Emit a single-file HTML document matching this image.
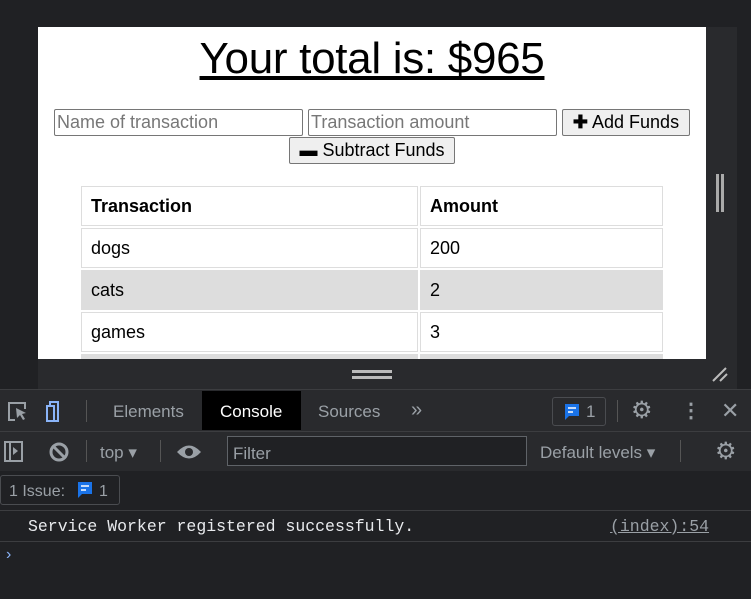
<!DOCTYPE html><html><head><style>
*{margin:0;padding:0;box-sizing:border-box}
body{width:751px;height:599px;background:#202124;position:relative;overflow:hidden;font-family:"Liberation Sans",sans-serif}
.a{position:absolute}
.page{left:38px;top:27px;width:668px;height:332px;background:#fff;overflow:hidden}
h1{position:absolute;left:0;width:668px;top:7px;text-align:center;font-weight:normal;font-size:44px;text-decoration:underline;color:#000;letter-spacing:-0.3px}
.inp{position:absolute;height:27px;border:1px solid #767676;border-radius:2px;font-size:18px;color:#777;padding:1px 2px;line-height:23px}
.btn{position:absolute;height:27px;border:1px solid #767676;border-radius:2px;background:#efefef;font-size:18px;color:#000;line-height:25px;text-align:center}
.c{position:absolute;border:1px solid #ddd;font-size:18px;color:#000;padding-left:9px;line-height:38px;height:40px}
.dt{color:#9aa0a6;font-size:17px}
.mono{font-family:'Liberation Mono',monospace;font-size:16.5px}
</style></head><body>
<div class="a" style="left:38px;top:359px;width:668px;height:30px;background:#292a2d"></div>
<div class="a" style="left:706px;top:27px;width:31px;height:362px;background:#292a2d"></div>
<div class="a" style="left:716px;top:174px;width:3px;height:38px;background:#aaa"></div>
<div class="a" style="left:721px;top:174px;width:3px;height:38px;background:#aaa"></div>
<div class="a" style="left:352px;top:370px;width:40px;height:3px;background:#bbb"></div>
<div class="a" style="left:352px;top:376px;width:40px;height:3px;background:#bbb"></div>
<svg class="a" style="left:710px;top:364px" width="22" height="20"><path d="M3 17L16 4M10 17L17 10" stroke="#bbb" stroke-width="2"/></svg>
<div class="a page">
<h1>Your total is: $965</h1>
<div class="inp" style="left:16px;top:82px;width:249px">Name of transaction</div>
<div class="inp" style="left:270px;top:82px;width:249px">Transaction amount</div>
<div class="btn" style="left:524px;top:82px;width:128px"><b>✚</b> Add Funds</div>
<div class="btn" style="left:251px;top:110px;width:166px"><b>▬</b> Subtract Funds</div>
<div class="c" style="left:43px;top:159px;width:337px;font-weight:bold">Transaction</div>
<div class="c" style="left:382px;top:159px;width:243px;font-weight:bold">Amount</div>
<div class="c" style="left:43px;top:201px;width:337px">dogs</div>
<div class="c" style="left:382px;top:201px;width:243px">200</div>
<div class="c" style="left:43px;top:243px;width:337px;background:#ddd">cats</div>
<div class="c" style="left:382px;top:243px;width:243px;background:#ddd">2</div>
<div class="c" style="left:43px;top:285px;width:337px">games</div>
<div class="c" style="left:382px;top:285px;width:243px">3</div>
<div class="c" style="left:43px;top:327px;width:337px;background:#ddd"></div>
<div class="c" style="left:382px;top:327px;width:243px;background:#ddd"></div>
</div>
<div class="a" style="left:0;top:389px;width:751px;height:1px;background:#3c3d40"></div>
<div class="a" style="left:0;top:390px;width:751px;height:41px;background:#292a2d"></div>
<div class="a" style="left:202px;top:391px;width:99px;height:39px;background:#000"></div>
<div class="a dt" style="left:113px;top:402px">Elements</div>
<div class="a" style="left:220px;top:402px;color:#fff;font-size:17px">Console</div>
<div class="a dt" style="left:318px;top:402px">Sources</div>
<div class="a dt" style="left:411px;top:399px;font-size:20px">»</div>
<svg class="a" style="left:6px;top:400px" width="60" height="24"><path d="M9 20H3V3h16v6" stroke="#9aa0a6" fill="none" stroke-width="2"/><path d="M10 8l10 5-4 1 3 5-2 1-3-5-3 3z" fill="#9aa0a6"/><rect x="41" y="6" width="7" height="15" stroke="#8ab4f8" fill="none" stroke-width="2"/><path d="M44 6V2h8v19h-4" stroke="#8ab4f8" fill="none" stroke-width="2"/></svg>
<div class="a" style="left:86px;top:400px;width:1px;height:22px;background:#555"></div>
<div class="a" style="left:552px;top:397px;width:54px;height:29px;border:1px solid #4a4c50;border-radius:3px"></div>
<svg class="a" style="left:563px;top:402px" width="20" height="20"><path d="M2 2h14v12H6l-4 4z" fill="#1a73e8"/><path d="M5 6h8M5 10h5" stroke="#fff" stroke-width="1.5"/></svg>
<div class="a dt" style="left:586px;top:402px">1</div>
<div class="a" style="left:617px;top:400px;width:1px;height:22px;background:#555"></div>
<div class="a dt" style="left:631px;top:396px;font-size:24px">⚙</div>
<div class="a dt" style="left:681px;top:398px;font-size:20px;font-weight:bold">⋮</div>
<div class="a dt" style="left:721px;top:398px;font-size:22px">✕</div>
<div class="a" style="left:0;top:431px;width:751px;height:1px;background:#3c3d40"></div>
<div class="a" style="left:0;top:432px;width:751px;height:39px;background:#292a2d"></div>
<svg class="a" style="left:4px;top:440px" width="70" height="24"><rect x="1" y="2" width="17" height="19" stroke="#9aa0a6" fill="none" stroke-width="2"/><path d="M6 2v19" stroke="#9aa0a6" stroke-width="2"/><path d="M9 7l5 4-5 4z" fill="#9aa0a6"/><circle cx="55" cy="12" r="8" stroke="#9aa0a6" fill="none" stroke-width="3"/><path d="M49 6l12 12" stroke="#9aa0a6" stroke-width="3"/></svg>
<div class="a" style="left:86px;top:440px;width:1px;height:22px;background:#555"></div>
<div class="a dt" style="left:100px;top:443px">top ▾</div>
<div class="a" style="left:160px;top:440px;width:1px;height:22px;background:#555"></div>
<svg class="a" style="left:176px;top:442px" width="26" height="20"><path d="M1 10Q13 -3 25 10Q13 23 1 10z" fill="#9aa0a6"/><circle cx="13" cy="10" r="4" fill="#292a2d"/></svg>
<div class="a" style="left:227px;top:436px;width:300px;height:30px;border:1px solid #5f6368;background:#202124"></div>
<div class="a dt" style="left:233px;top:444px">Filter</div>
<div class="a dt" style="left:540px;top:443px">Default levels ▾</div>
<div class="a" style="left:680px;top:440px;width:1px;height:22px;background:#555"></div>
<div class="a dt" style="left:715px;top:437px;font-size:24px">⚙</div>
<div class="a" style="left:0;top:475px;width:120px;height:30px;border:1px solid #4a4c50;border-radius:3px"></div>
<div class="a dt" style="left:9px;top:483px;font-size:16px">1 Issue:</div>
<svg class="a" style="left:77px;top:481px" width="18" height="20"><path d="M1 1h14v12H5l-4 4z" fill="#1a73e8"/><path d="M4 5h8M4 9h5" stroke="#fff" stroke-width="1.5"/></svg>
<div class="a dt" style="left:99px;top:483px;font-size:16px">1</div>
<div class="a" style="left:0;top:510px;width:751px;height:1px;background:#3c3d40"></div>
<div class="a mono" style="left:28px;top:517px;color:#e8eaed">Service Worker registered successfully.</div>
<div class="a mono" style="left:610px;top:517px;color:#9aa0a6;text-decoration:underline">(index):54</div>
<div class="a" style="left:0;top:541px;width:751px;height:1px;background:#3c3d40"></div>
<div class="a" style="left:6px;top:546px;color:#8ab4f8;font-size:16px">›</div>
</body></html>
